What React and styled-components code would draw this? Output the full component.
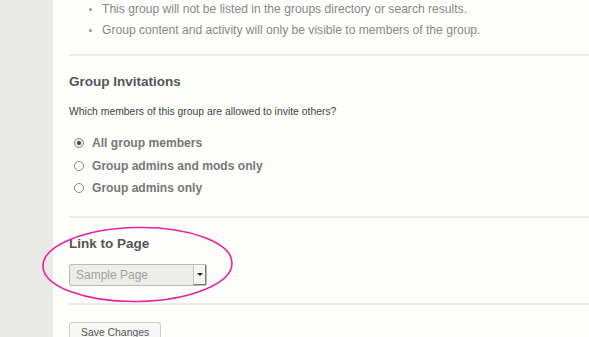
import styled, { createGlobalStyle } from 'styled-components';

const GlobalStyle = createGlobalStyle`
  html, body {
    margin: 0;
    padding: 0;
    background: #fdfdfb;
  }
  body {
    font-family: "Liberation Sans", Arial, sans-serif;
  }
`;

const Page = styled.div`
  display: flex;
  width: 589px;
  height: 337px;
  overflow: hidden;
`;

const Sidebar = styled.div`
  width: 53px;
  flex-shrink: 0;
  background-color: #e9e9e7;
`;

const Main = styled.div`
  position: relative;
  flex: 1;
  padding-left: 16px;
  background-color: #fdfdfb;
`;

const BulletList = styled.ul`
  margin: -1px 0 0 0;
  padding: 0 0 0 33px;
  list-style: disc;
  color: #888;
  font-size: 12.1px;
  line-height: 21px;

  li::marker {
    color: #999;
    font-size: 10px;
  }
`;

const Divider = styled.hr`
  border: none;
  border-top: 2px solid #ebebea;
  margin: ${({ $top }) => $top}px 0 0 0;
  height: 0;
`;

const Heading = styled.h3`
  margin: ${({ $top }) => $top}px 0 0 0;
  font-size: 13.5px;
  line-height: 18px;
  font-weight: bold;
  color: #555;
`;

const Question = styled.p`
  margin: 14px 0 0 0;
  font-size: 10.4px;
  line-height: 14px;
  color: #444;
`;

const RadioGroup = styled.div`
  display: flex;
  flex-direction: column;
  margin-top: 13px;
`;

const RadioRow = styled.label`
  display: flex;
  align-items: center;
  gap: 8px;
  height: 22.5px;
  padding-left: 5px;
  font-size: 12.1px;
  font-weight: bold;
  color: #777;
`;

const RadioDot = styled.span`
  position: relative;
  width: 8px;
  height: 8px;
  border-radius: 50%;
  border: 1px solid #8a8a8a;
  background: ${({ $checked }) => ($checked ? '#e6e6e6' : '#fff')};

  &::after {
    content: '';
    display: ${({ $checked }) => ($checked ? 'block' : 'none')};
    position: absolute;
    left: 2px;
    top: 2px;
    width: 4px;
    height: 4px;
    border-radius: 50%;
    background: #444;
  }
`;

const Select = styled.div`
  display: flex;
  width: 138px;
  height: 22px;
  margin-top: 11px;
  box-sizing: border-box;
  border: 1px solid #b9b9b9;
  border-radius: 2px;
  background: #ececea;
`;

const SelectText = styled.span`
  flex: 1;
  padding-left: 6px;
  font-size: 12px;
  line-height: 20px;
  color: #a2a2a2;
`;

const SelectArrow = styled.span`
  display: flex;
  align-items: center;
  justify-content: center;
  width: 11px;
  border-left: 1px solid #c8c8c8;
  background: #f4f4f2;
  border-right: 1px solid #777;
  border-bottom: 1px solid #777;

  &::before {
    content: '';
    border-left: 3px solid transparent;
    border-right: 3px solid transparent;
    border-top: 3px solid #222;
  }
`;

const SaveButton = styled.button`
  margin-top: 17px;
  height: 21px;
  padding: 0 11px;
  border: 1px solid #cfcfcf;
  border-bottom: none;
  border-radius: 3px 3px 0 0;
  background: #f7f7f6;
  font-family: "Liberation Sans", Arial, sans-serif;
  font-size: 10.4px;
  line-height: 12px;
  color: #555;
`;

const Annotation = styled.svg`
  position: absolute;
  left: -53px;
  top: 0;
  pointer-events: none;
`;

const options = [
  { label: 'All group members', checked: true },
  { label: 'Group admins and mods only' },
  { label: 'Group admins only' },
];

const App = () => (
  <>
    <GlobalStyle />
    <Page>
      <Sidebar />
      <Main>
        <BulletList>
          <li>This group will not be listed in the groups directory or search results.</li>
          <li>Group content and activity will only be visible to members of the group.</li>
        </BulletList>
        <Divider $top={13} />

        <Heading $top={17}>Group Invitations</Heading>
        <Question>Which members of this group are allowed to invite others?</Question>
        <RadioGroup>
          {options.map((o) => (
            <RadioRow key={o.label}>
              <RadioDot $checked={o.checked} />
              {o.label}
            </RadioRow>
          ))}
        </RadioGroup>
        <Divider $top={16} />

        <Heading $top={17}>Link to Page</Heading>
        <Select>
          <SelectText>Sample Page</SelectText>
          <SelectArrow />
        </Select>
        <Divider $top={17} />

        <SaveButton>Save Changes</SaveButton>

        <Annotation width="589" height="337">
          <ellipse
            cx="137.5"
            cy="264.5"
            rx="94.5"
            ry="37"
            fill="none"
            stroke="#e8229f"
            strokeWidth="1.6"
            transform="rotate(-1 137.5 264.5)"
          />
        </Annotation>
      </Main>
    </Page>
  </>
);

export default App;
